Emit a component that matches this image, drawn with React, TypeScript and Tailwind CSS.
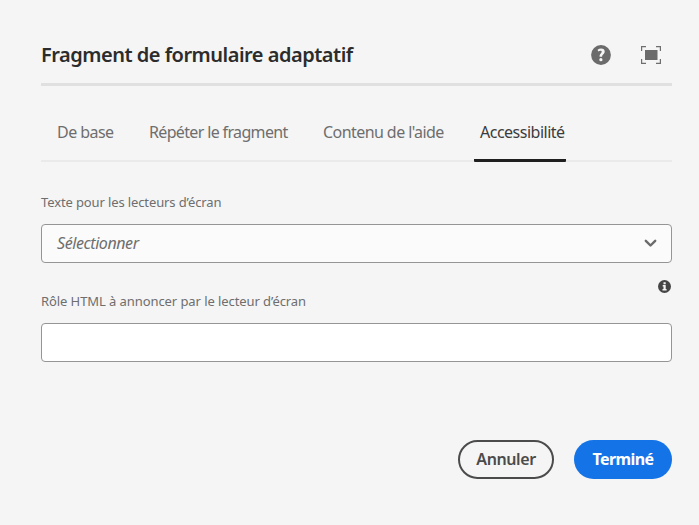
import React from "react";

const tabs = [
  { label: "De base", style: "ml-4 w-14 tracking-[-0.55px]" },
  { label: "Répéter le fragment", style: "ml-9 w-[139px] tracking-[-0.65px]" },
  { label: "Contenu de l'aide", style: "ml-[35px] w-[122px] tracking-[-0.57px]" },
];

function HelpIcon() {
  return (
    <svg width="20" height="20" viewBox="0 0 20 20">
      <circle cx="10" cy="10" r="9.9" fill="#6b6b6b" />
      <path d="M6.6 4.8c1-.8 2.3-1.2 3.6-1.2 2.2 0 3.5 1.2 3.5 3 0 2.6-2.6 3-2.6 5.1H8.6c-.2-2.8 2.1-3.5 2.1-4.9 0-.7-.4-1-1.2-1-.8 0-1.6.3-2.3.8z" fill="#f5f5f5" />
      <circle cx="9.9" cy="14.7" r="1.6" fill="#f5f5f5" />
    </svg>
  );
}

function FullScreenIcon() {
  return (
    <svg width="20" height="18" viewBox="0 0 20 18">
      <path d="M.6 5V.6H5M15 .6h4.4V5M19.4 13v4.4H15M5 17.4H.6V13" fill="none" stroke="#6e6e6e" strokeWidth="1.2" />
      <path d="M4 4h12.5v10H4z" fill="#6b6b6b" />
    </svg>
  );
}

export default function App() {
  return (
    <main className="h-[525px] w-[699px] overflow-hidden bg-[#f5f5f5] pl-[41px] pr-[27px] font-['Noto_Sans',sans-serif] whitespace-nowrap text-[#6e6e6e]">
      <header className="flex h-[86px] justify-between border-b-[3px] border-[#e0e0e0] pt-[41px]">
        <h1 className="h-7 text-[20px] leading-7 font-semibold tracking-[-0.5px] text-[#2c2c2c]">Fragment de formulaire adaptatif</h1>
        <div className="mt-1 flex h-5 items-center gap-[30px] pr-[11px]">
          <button aria-label="Aide"><HelpIcon /></button>
          <button aria-label="Plein écran"><FullScreenIcon /></button>
        </div>
      </header>
      <nav className="flex h-[76px] border-b-2 border-[#eaeaea] pt-[34px] text-[16px] leading-6">
        {tabs.map((t) => (
          <button key={t.label} className={`h-6 text-left ${t.style}`}>{t.label}</button>
        ))}
        <button className="ml-[29px] flex h-[42px] w-[92px] items-start rounded-b-[1px] border-b-[3px] border-[#1f1f1f] pl-1.5 tracking-[-0.5px] text-[#3c3c3c]">Accessibilité</button>
      </nav>
      <section className="pt-[30px] text-[13px] leading-5">
        <div className="h-5 tracking-[-0.12px]">Texte pour les lecteurs d’écran</div>
        <button className="mt-3 flex h-[39px] w-full items-center justify-between rounded-[4px] border border-[#959595] bg-[#fbfbfb] pl-[15px] pr-3.5">
          <span className="-mt-px text-[16px] tracking-[-0.43px] italic">Sélectionner</span>
          <svg width="13" height="9" viewBox="0 0 13 9" fill="none" stroke="#6b6b6b" strokeWidth="2.4" strokeLinecap="round" strokeLinejoin="round"><path d="m1.8 1.8 4.7 4.7 4.7-4.7" /></svg>
        </button>
        <div className="flex h-7 items-end justify-end pr-px">
          <svg className="-mb-0.5" width="13" height="13" viewBox="0 0 13 13">
            <circle cx="6.5" cy="6.5" r="6.5" fill="#464646" />
            <path d="M5.5 2.2h2.2v2H5.5zM4.7 5.1h3v4h.9v1.4H4.5V9.1h1V6.4h-.8z" fill="#f5f5f5" />
          </svg>
        </div>
        <label className="block h-5 tracking-[-0.08px]" htmlFor="role">Rôle HTML à annoncer par le lecteur d’écran</label>
        <input id="role" className="mt-3 block h-[39px] w-full rounded-[4px] border border-[#959595] bg-white px-4" />
      </section>
      <footer className="mt-[78px] flex justify-end gap-5 text-[16px] leading-6 font-semibold">
        <button className="h-[39px] w-[96px] rounded-full border-2 border-[#4b4b4b] pb-px tracking-[-0.4px] text-[#4b4b4b]">Annuler</button>
        <button className="h-[39px] w-[98px] rounded-full bg-[#1473e6] pb-px font-bold tracking-[-0.6px] text-white">Terminé</button>
      </footer>
    </main>
  );
}
